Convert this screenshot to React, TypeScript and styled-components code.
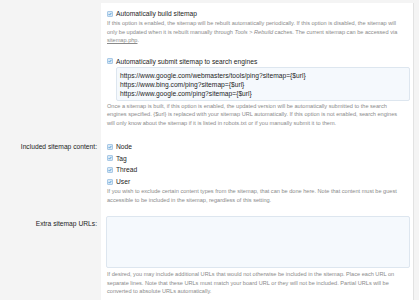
import React from "react";
import styled, { createGlobalStyle } from "styled-components";

const GlobalStyle = createGlobalStyle`
  html, body {
    margin: 0;
    padding: 0;
    background: #f4f4f4;
  }
  body {
    font-family: "Liberation Sans", Arial, sans-serif;
    color: #1d1d1d;
  }
`;

const Page = styled.div`
  padding: 3px 5px 0 0;
  width: 419px;
  height: 300px;
  box-sizing: border-box;
  overflow: hidden;
`;

const Form = styled.div`
  display: flex;
  flex-direction: column;
`;

const Row = styled.div`
  display: grid;
  grid-template-columns: 101px 1fr;
`;

const Label = styled.div<{ $top: number }>`
  text-align: right;
  font-size: 6.7px;
  line-height: 9px;
  padding: ${(p) => p.$top}px 4px 0 0;
  color: #1d1d1d;
`;

const Field = styled.div<{ $top: number; $bottom: number }>`
  background: #fff;
  border-right: 1px solid #e2e2e2;
  padding: ${(p) => p.$top}px 3px ${(p) => p.$bottom}px 6px;
  display: flex;
  flex-direction: column;
`;

const CheckList = styled.div<{ $gap?: number }>`
  display: flex;
  flex-direction: column;
  gap: ${(p) => p.$gap ?? 0}px;
`;

const CheckRow = styled.label`
  display: flex;
  align-items: center;
  gap: 3px;
  font-size: 6.7px;
  line-height: 9px;
  color: #1d1d1d;
`;

const Box = styled.span`
  width: 6px;
  height: 6px;
  box-sizing: border-box;
  border: 1px solid #a9c9e6;
  background: #d9e9f6;
  border-radius: 1px;
  display: inline-flex;
  align-items: center;
  justify-content: center;
  flex: none;
`;

const Hint = styled.div<{ $mt?: number }>`
  font-size: 5.6px;
  line-height: 8.5px;
  color: #8a8a8a;
  margin-top: ${(p) => p.$mt ?? 1}px;
  padding-right: 4px;

  a {
    color: #8a8a8a;
    text-decoration: underline;
  }
`;

const Em = styled.i`
  font-style: italic;
`;

const Sub = styled.div<{ $mt?: number }>`
  margin-top: ${(p) => p.$mt ?? 0}px;
  display: flex;
  flex-direction: column;
`;

const Area = styled.div<{ $indent: number; $height: number }>`
  margin: 1px 0 0 ${(p) => p.$indent}px;
  height: ${(p) => p.$height}px;
  box-sizing: border-box;
  background: #f5f9fd;
  border: 1px solid #dde6ef;
  border-radius: 2px;
  padding: 3px 3px;
  font-size: 6.7px;
  line-height: 9px;
  color: #1d1d1d;
  white-space: pre;
`;

function Check({ children }: { children: React.ReactNode }) {
  return (
    <CheckRow>
      <Box>
        <svg width="4" height="4" viewBox="0 0 4 4">
          <path
            d="M0.6 2.1 L1.6 3.1 L3.4 0.9"
            fill="none"
            stroke="#3f91d2"
            strokeWidth="0.8"
          />
        </svg>
      </Box>
      {children}
    </CheckRow>
  );
}

const urls = [
  "https://www.google.com/webmasters/tools/ping?sitemap={$url}",
  "https://www.bing.com/ping?sitemap={$url}",
  "https://www.google.com/ping?sitemap={$url}",
];

const submitHint =
  "Once a sitemap is built, if this option is enabled, the updated version will be automatically submitted to the search engines specified. {$url} is replaced with your sitemap URL automatically. If this option is not enabled, search engines will only know about the sitemap if it is listed in robots.txt or if you manually submit it to them.";

export default function App() {
  return (
    <>
      <GlobalStyle />
      <Page>
        <Form>
          <Row>
            <Label $top={0} />
            <Field $top={6} $bottom={6}>
              <Sub>
                <Check>Automatically build sitemap</Check>
                <Hint>
                  <span>
                    If this option is enabled, the sitemap will be rebuilt
                    automatically periodically. If this option is disabled, the
                    sitemap will{" "}
                  </span>
                  <span>only be updated when it is rebuilt manually through </span>
                  <Em>Tools</Em>
                  <span> &gt; </span>
                  <Em>Rebuild</Em>
                  <span> caches. The current sitemap can be accessed via </span>
                  <a>sitemap.php</a>.
                </Hint>
              </Sub>
              <Sub $mt={12}>
                <Check>Automatically submit sitemap to search engines</Check>
                <Area $indent={9} $height={34}>
                  {urls.join("\n")}
                </Area>
                <Hint>{submitHint}</Hint>
              </Sub>
            </Field>
          </Row>
          <Row>
            <Label $top={9}>Included sitemap content:</Label>
            <Field $top={9} $bottom={11}>
              <CheckList $gap={2.7}>
                <Check>Node</Check>
                <Check>Tag</Check>
                <Check>Thread</Check>
                <Check>User</Check>
              </CheckList>
              <Hint>
                If you wish to exclude certain content types from the sitemap,
                that can be done here. Note that content must be guest
                accessible to be included in the sitemap, regardless of this
                setting.
              </Hint>
            </Field>
          </Row>
          <Row>
            <Label $top={4}>Extra sitemap URLs:</Label>
            <Field $top={0} $bottom={8}>
              <Area $indent={-1} $height={52} />
              <Hint $mt={2}>
                If desired, you may include additional URLs that would not
                otherwise be included in the sitemap. Place each URL on
                separate lines. Note that these URLs must match your board URL
                or they will not be included. Partial URLs will be converted to
                absolute URLs automatically.
              </Hint>
            </Field>
          </Row>
        </Form>
      </Page>
    </>
  );
}
